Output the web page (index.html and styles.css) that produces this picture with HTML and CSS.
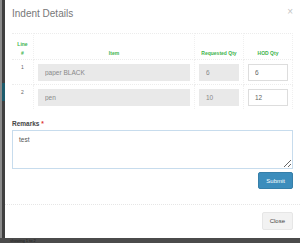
FILE: index.html
```html
<!DOCTYPE html>
<html lang="en">
  <head>
    <meta charset="UTF-8" />
    <meta name="viewport" content="width=device-width, initial-scale=1.0" />
    <title>Indent Details</title>
    <link rel="stylesheet" href="styles.css">
  </head>
  <body>
    <div class="page">
      <div class="side-strip">
        <div class="side-active"></div>
      </div>

      <div class="modal">
        <div class="modal-header">
          <h4 class="modal-title">Indent Details</h4>
          <span class="close-x">&times;</span>
        </div>

        <div class="modal-body">
          <table class="indent-table">
            <thead>
              <tr>
                <th class="col-line">Line<br />#</th>
                <th class="col-item">Item</th>
                <th class="col-qty">Requested Qty</th>
                <th class="col-qty">HOD Qty</th>
              </tr>
            </thead>
            <tbody>
              <tr>
                <td class="line-no">1</td>
                <td><input type="text" class="field readonly" value="paper BLACK" readonly /></td>
                <td><input type="text" class="field readonly" value="6" readonly /></td>
                <td><input type="text" class="field" value="6" /></td>
              </tr>
              <tr>
                <td class="line-no">2</td>
                <td><input type="text" class="field readonly" value="pen" readonly /></td>
                <td><input type="text" class="field readonly" value="10" readonly /></td>
                <td><input type="text" class="field" value="12" /></td>
              </tr>
            </tbody>
          </table>

          <label class="remarks-label" for="remarks">Remarks <span class="req">*</span></label>
          <textarea id="remarks" class="remarks">test</textarea>

          <div class="submit-row">
            <button class="btn btn-primary">Submit</button>
          </div>
        </div>

        <div class="modal-footer">
          <button class="btn btn-default">Close</button>
        </div>
      </div>
    </div>
    <div class="under-text">showing 1 to 2</div>
  </body>
</html>
```

FILE: styles.css
```css
body {
  margin: 0;
  font-family: "Liberation Sans", Arial, sans-serif;
  background: #4b4b4b;
  height: 243px;
  overflow: hidden;
}

.page {
  display: flex;
  height: 238px;
}

.side-strip {
  width: 3px;
  border-left: 2px solid #8a8a8a;
  background: #3f3f3f;
  padding-top: 83px;
}

.side-active {
  height: 18px;
  background: #1c5b6b;
}

.modal {
  flex: 1;
  background: #fff;
  display: flex;
  flex-direction: column;
}

.modal-header {
  display: flex;
  justify-content: space-between;
  align-items: flex-start;
  padding: 8px 7px 0 7px;
  height: 26px;
  box-sizing: border-box;
}

.modal-title {
  margin: 0;
  font-size: 10px;
  font-weight: normal;
  color: #777;
}

.close-x {
  font-size: 10px;
  line-height: 8px;
  color: #c4c4c4;
}

.modal-body {
  padding: 7px 7px 0 7px;
}

.indent-table {
  width: 100%;
  border-collapse: collapse;
}

.indent-table th,
.indent-table td {
  border: 1px dotted #ececec;
  border-left: none;
  border-right: 1px dotted #f0f0f0;
}

.indent-table th {
  color: #3cb44b;
  font-size: 5px;
  font-weight: bold;
  vertical-align: bottom;
  padding: 6px 2px 1px 2px;
  line-height: 9px;
}

.col-line {
  width: 17px;
  text-align: center;
}

.col-qty {
  width: 44px;
}

.indent-table td {
  padding: 4px 4px 3px 4px;
  vertical-align: top;
}

.indent-table tbody tr:last-child td {
  border-bottom: none;
}

.line-no {
  font-size: 5px;
  color: #666;
  text-align: center;
}

.field {
  display: block;
  width: 100%;
  box-sizing: border-box;
  height: 17px;
  border: 1px solid #ddd;
  font-family: "Liberation Sans", Arial, sans-serif;
  font-size: 6.5px;
  color: #666;
  padding: 0 6px;
  background: #fff;
  outline: none;
}

.field.readonly {
  background: #e9e9e9;
  border-color: #e9e9e9;
  color: #888;
}

.remarks-label {
  display: block;
  margin-top: 11px;
  font-size: 6.5px;
  font-weight: bold;
  color: #444;
}

.req {
  color: #d33;
}

.remarks {
  display: block;
  width: 100%;
  box-sizing: border-box;
  height: 39px;
  margin-top: 3px;
  border: 1px solid #c7dced;
  font-family: "Liberation Sans", Arial, sans-serif;
  font-size: 6.5px;
  color: #555;
  padding: 5px 6px;
  resize: vertical;
  outline: none;
}

.submit-row {
  display: flex;
  justify-content: flex-end;
  margin-top: 3px;
}

.btn {
  font-family: "Liberation Sans", Arial, sans-serif;
  font-size: 6px;
  height: 17px;
  border-radius: 2px;
  padding: 0 7px;
  cursor: pointer;
}

.btn-primary {
  background: #3c8dbc;
  border: 1px solid #367fa9;
  color: #fff;
}

.btn-default {
  background: #f2f2f2;
  border: 1px solid #e6e6e6;
  color: #444;
  height: 18px;
}

.modal-footer {
  margin-top: 15px;
  border-top: 1px dotted #e6e6e6;
  padding: 7px 7px 0 7px;
  display: flex;
  justify-content: flex-end;
}

.under-text {
  font-size: 4px;
  color: #222;
  padding-left: 10px;
}
```
